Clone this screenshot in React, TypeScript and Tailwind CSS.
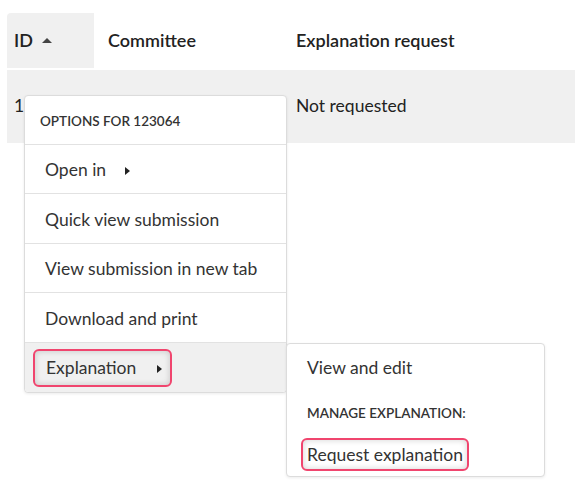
import React from 'react';

const items = [
  { label: 'Quick view submission', h: 'h-[50px]' },
  { label: 'View submission in new tab', h: 'h-[49px]' },
  { label: 'Download and print', h: 'h-[50px]' },
];

const Caret: React.FC = () => (
  <span className="inline-block w-0 h-0 border-y-[4px] border-y-transparent border-l-[5px] border-l-[#222]" />
);

const App: React.FC = () => {
  return (
    <div className="relative w-[575px] h-[492px] bg-white font-['Lato','Noto_Sans',sans-serif] text-[#222]">
      <div className="pt-[13px] pl-[7px]">
        <div className="flex h-[57px] items-center pb-[2px] text-[18px] font-semibold">
          <div className="flex h-full w-[87px] items-center gap-[9px] rounded-tl-[4px] bg-[#f0f0f0] pl-[7px]">
            <span>ID</span>
            <span className="inline-block w-0 h-0 border-x-[5px] border-x-transparent border-b-[5px] border-b-[#444]" />
          </div>
          <div className="w-[188px] pl-[14px]">Committee</div>
          <div className="pl-[14px]">Explanation request</div>
        </div>
        <div className="flex h-[73px] items-center bg-[#f0f0f0] text-[17.5px]">
          <div className="w-[87px] pl-[7px]">123064</div>
          <div className="w-[188px]" />
          <div className="pl-[14px]">Not requested</div>
        </div>
      </div>

      {/* options menu */}
      <div className="absolute left-[24px] top-[95px] w-[263px] rounded-[4px] border border-[#dcdcdc] bg-white text-[#333] shadow-[0_1px_3px_rgba(0,0,0,0.08)]">
        <div className="flex h-[49px] items-center border-b border-[#e2e2e2] pl-[15px] pt-[2px] text-[13.5px] font-semibold uppercase">
          Options for 123064
        </div>
        <div className="flex h-[49px] items-center gap-[19px] border-b border-[#e2e2e2] pl-[20px] pt-[3px] text-[17.5px]">
          <span>Open in</span>
          <Caret />
        </div>
        {items.map(it => (
          <div key={it.label} className={`flex ${it.h} items-center border-b border-[#e2e2e2] pl-[20px] pt-[3px] text-[17.5px]`}>
            {it.label}
          </div>
        ))}
        <div className="flex h-[49px] items-center rounded-b-[4px] bg-[#f0f0f0] pl-[8px]">
          <div className="flex h-[38px] w-[139px] items-center gap-[21px] rounded-[6px] border-2 border-[#f0456e] pl-[11px] pt-[2px] text-[17.5px] shadow-[inset_0_0_6px_rgba(0,0,0,0.18)]">
            <span>Explanation</span>
            <Caret />
          </div>
        </div>
      </div>

      {/* explanation submenu */}
      <div className="absolute left-[286px] top-[343px] flex h-[134px] w-[259px] flex-col rounded-[4px] border border-[#dcdcdc] bg-white text-[#333] shadow-[0_1px_3px_rgba(0,0,0,0.08)]">
        <div className="flex h-[46px] items-center pl-[20px] pt-[2px] text-[17.5px]">View and edit</div>
        <div className="flex h-[45px] items-center pl-[20px] pt-[2px] text-[13.5px] font-semibold uppercase">Manage explanation:</div>
        <div className="pl-[14px] pt-[3px]">
          <div className="inline-flex h-[33px] items-center rounded-[6px] border-2 border-[#f0456e] px-[4px] pt-[2px] text-[17.5px] shadow-[inset_0_0_6px_rgba(0,0,0,0.18)]">
            Request explanation
          </div>
        </div>
      </div>
    </div>
  );
};

export default App;
